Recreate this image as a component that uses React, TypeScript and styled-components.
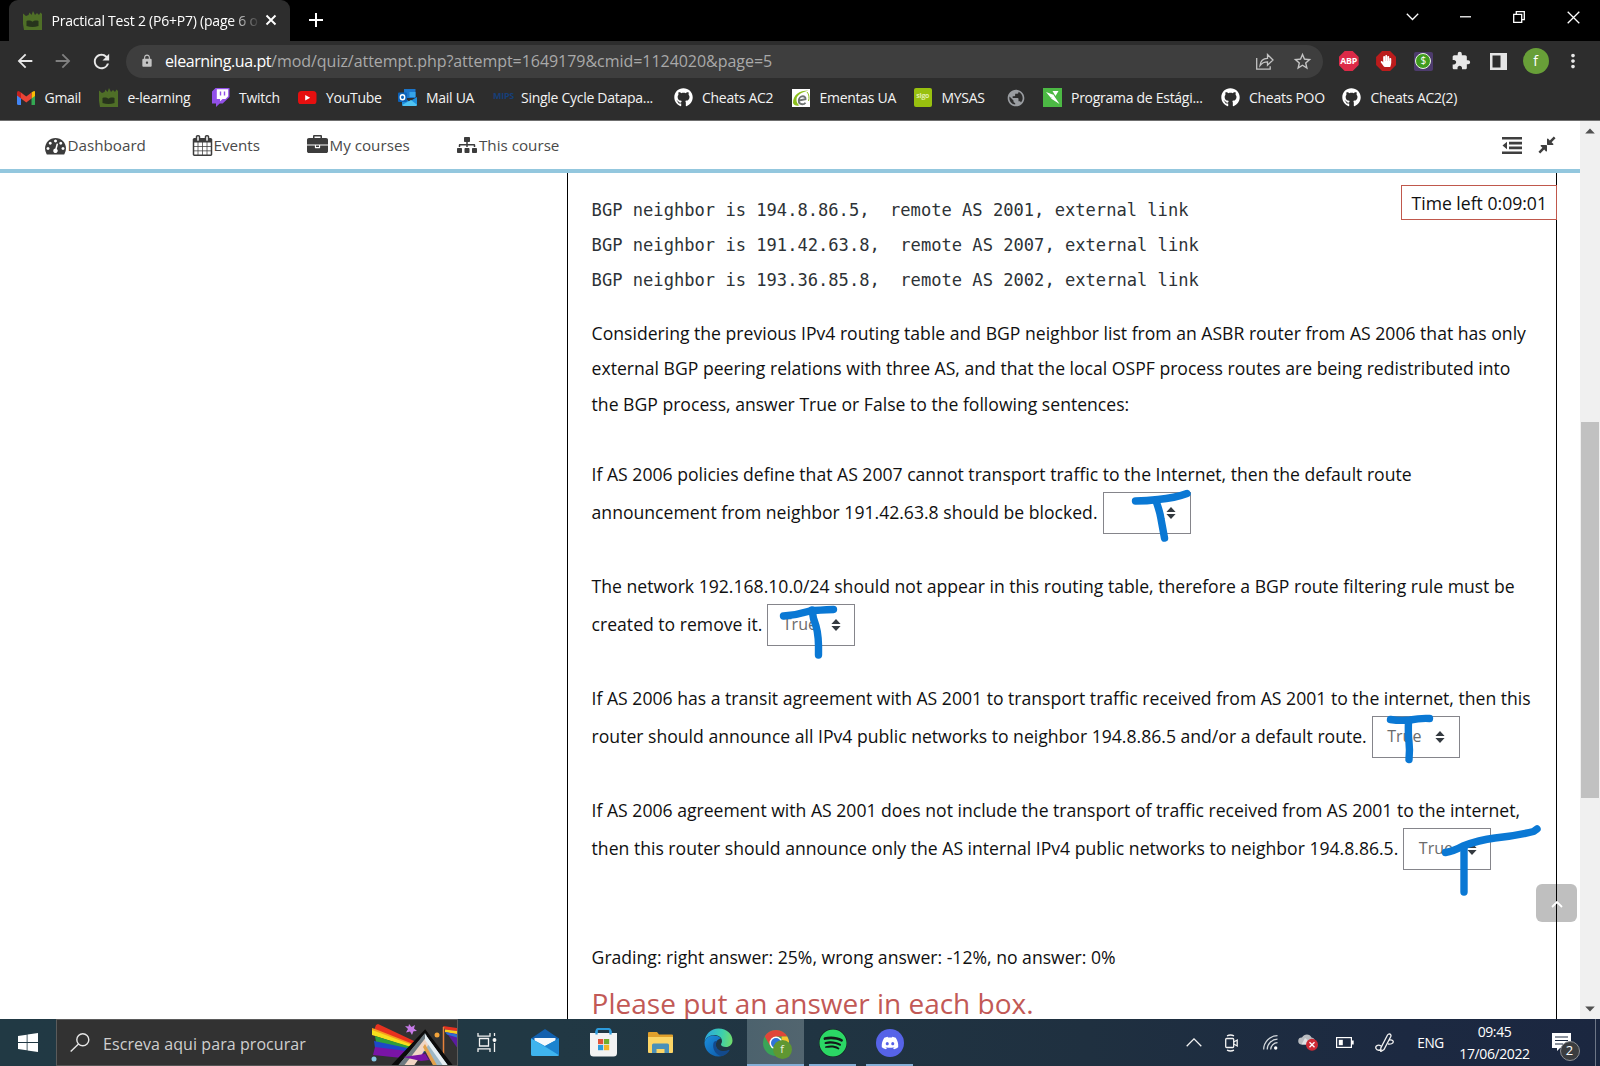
import React from "react";
import styled, { createGlobalStyle, css } from "styled-components";
import { FaGithub, FaSitemap, FaSpotify, FaDiscord, FaHandPaper } from "react-icons/fa";
import { MdExtension, MdLock, MdRefresh, MdArrowBack, MdArrowForward, MdMoreVert, MdStarBorder, MdPublic } from "react-icons/md";

const GlobalStyle = createGlobalStyle`
  * { box-sizing: border-box; }
  body { margin: 0; background: #fff; font-family: "Open Sans", "Noto Sans", sans-serif; overflow: hidden; }
  svg { display: block; flex: none; }
`;

const Screen = styled.div`
  width: 1600px;
  height: 1066px;
  display: flex;
  flex-direction: column;
  overflow: hidden;
`;

/* ---------- browser chrome ---------- */

const TabStrip = styled.div`
  height: 41px;
  flex: none;
  background: #000;
  display: flex;
  padding-left: 9px;
`;

const Tab = styled.div`
  width: 281px;
  height: 41px;
  background: #2d2d2d;
  border-radius: 9px 9px 0 0;
  display: flex;
  align-items: center;
  padding: 0 13px 1px 14px;
  color: #fff;
`;

const TabTitle = styled.div`
  flex: 1;
  margin: 0 0 0 9.5px;
  font-size: 14px;
  letter-spacing: -0.22px;
  white-space: nowrap;
  mask-image: linear-gradient(90deg, #000 84%, transparent 98%);
`;

const NewTab = styled.div`
  width: 52px;
  padding-bottom: 2px;
  display: flex;
  align-items: center;
  justify-content: center;
`;

const WindowButtons = styled.div`
  margin-left: auto;
  display: flex;
  height: 34px;
`;

const WindowButton = styled.div`
  width: 53.7px;
  display: flex;
  align-items: center;
  justify-content: center;
`;

const Toolbar = styled.div`
  height: 40px;
  flex: none;
  background: #2d2d2d;
  display: flex;
  align-items: center;
  color: #e8e8e8;
`;

const ToolButton = styled.div<{ $w: number; $dim?: boolean }>`
  width: ${(p) => p.$w}px;
  flex: none;
  display: flex;
  align-items: center;
  justify-content: center;
  color: ${(p) => (p.$dim ? "#808080" : "#e8e8e8")};
`;

const Omnibox = styled.div`
  width: 1197px;
  flex: none;
  height: 33px;
  margin-right: 7px;
  border-radius: 17px;
  background: #3e3e3e;
  display: flex;
  align-items: center;
  padding: 0 2px 0 14px;
  color: #c4c4c4;
`;

const Url = styled.div`
  flex: 1;
  margin-left: 11px;
  font-size: 16px;
  letter-spacing: -0.04px;
  color: #a9a9a9;
  white-space: nowrap;
`;

const Domain = styled.span`
  color: #fff;
  letter-spacing: -0.42px;
`;

const OmniAction = styled.div`
  width: 37.5px;
  display: flex;
  justify-content: center;
`;

const Avatar = styled.div`
  width: 26px;
  height: 26px;
  border-radius: 50%;
  background: #689f38;
  color: #fff;
  font-size: 14px;
  line-height: 25px;
  text-align: center;
`;

const AbpBadge = styled.div`
  width: 20px;
  height: 20px;
  background: #dc2a48;
  clip-path: polygon(30% 0, 70% 0, 100% 30%, 100% 70%, 70% 100%, 30% 100%, 0 70%, 0 30%);
  color: #fff;
  font-size: 8.8px;
  font-weight: 700;
  letter-spacing: -0.2px;
  line-height: 20px;
  text-align: center;
`;

const HandBadge = styled.div`
  width: 20px;
  height: 20px;
  background: #bb1c1c;
  clip-path: polygon(30% 0, 70% 0, 100% 30%, 100% 70%, 70% 100%, 30% 100%, 0 70%, 0 30%);
  display: flex;
  align-items: center;
  justify-content: center;
  color: #fff;
`;

const CoinBadge = styled.div`
  width: 19px;
  height: 19px;
  background: #4d3b6d;
  border-radius: 2px;
  display: flex;
  align-items: center;
  justify-content: center;
`;

const Coin = styled.div`
  width: 16px;
  height: 16px;
  border-radius: 50%;
  border: 1.5px solid #e9f3e4;
  background: #3f9b1d;
  color: #fff;
  font-size: 10px;
  line-height: 13px;
  text-align: center;
`;

const Bookmarks = styled.div`
  height: 40px;
  flex: none;
  background: #2d2d2d;
  border-bottom: 1px solid #6f6f6f;
  display: flex;
  align-items: center;
  padding: 0 0 6px 16.5px;
`;

const Bookmark = styled.div<{ $w: number }>`
  width: ${(p) => p.$w}px;
  flex: none;
  display: flex;
  align-items: center;
  gap: 9.5px;
  color: #f3f3f3;
  font-size: 14px;
  letter-spacing: -0.28px;
  white-space: nowrap;
`;

const SiteTile = styled.div<{ $bg: string; $fg: string; $size: number }>`
  width: 18.5px;
  height: 18.5px;
  border-radius: 2px;
  background: ${(p) => p.$bg};
  color: ${(p) => p.$fg};
  font-size: ${(p) => p.$size}px;
  line-height: 16.5px;
  text-align: center;
  font-weight: 700;
`;

/* ---------- page ---------- */

const Viewport = styled.div`
  flex: 1;
  min-height: 0;
  display: flex;
  background: #fff;
`;

const Page = styled.div`
  width: 1580px;
  display: flex;
  flex-direction: column;
  position: relative;
  overflow: hidden;
`;

const SiteNav = styled.div`
  height: 52px;
  flex: none;
  border-bottom: 4px solid #93c7de;
  display: flex;
  align-items: center;
  padding: 0 23px 0 45px;
  color: #3f3f3f;
`;

const NavItem = styled.div<{ $w: number; $gap: number }>`
  width: ${(p) => p.$w}px;
  display: flex;
  align-items: center;
  gap: ${(p) => p.$gap}px;
  font-size: 15.2px;
  line-height: 22px;
  padding-bottom: 1px;
  color: #4a4a4a;
  svg { color: #3c3c3c; margin-top: 1px; }
`;

const NavTools = styled.div`
  margin-left: auto;
  display: flex;
  align-items: center;
  gap: 15px;
`;

const Question = styled.div`
  flex: 1;
  width: 990px;
  margin-left: 567px;
  border-left: 1.5px solid #000;
  border-right: 1.5px solid #000;
  padding: 19.6px 0 0 23.6px;
  font-size: 17.6px;
  line-height: 35.2px;
  color: #101010;
  white-space: nowrap;
`;

const NeighborList = styled.pre`
  margin: 0 0 18px;
  font-family: "DejaVu Sans Mono", "Liberation Mono", monospace;
  font-size: 17.1px;
  line-height: 35.2px;
  color: #2d3236;
`;

const Line = styled.div`
  height: 35.2px;
`;

const Statement = styled.div`
  margin-top: 35.2px;
`;

const AnswerLine = styled.div`
  height: 41.6px;
  display: flex;
  align-items: center;
`;

const Select = styled.div`
  position: relative;
  width: 88px;
  height: 42px;
  flex: none;
  margin-left: 5px;
  border: 1px solid #85858b;
  padding: 0 13.5px 0 14.5px;
  display: flex;
  align-items: center;
  justify-content: space-between;
  font-size: 16px;
  color: #6b6b6b;
  background: #fff;
`;

const Ink = styled.svg`
  position: absolute;
  left: -1px;
  top: -1px;
  overflow: visible;
  fill: none;
  stroke: #0a78d4;
  stroke-width: 7.4;
  stroke-linecap: round;
  stroke-linejoin: round;
  z-index: 1;
`;

const Grading = styled.div`
  margin-top: 70.4px;
`;

const Warning = styled.div`
  margin-top: 11px;
  font-size: 28px;
  line-height: 34px;
  color: #c25956;
`;

const Timer = styled.div`
  position: absolute;
  left: 1401px;
  top: 64px;
  width: 156px;
  height: 35px;
  border: 1px solid #c0584c;
  background: #fff;
  font-size: 17.6px;
  line-height: 34px;
  padding-left: 9.5px;
  color: #101010;
`;

const BackToTop = styled.div`
  position: absolute;
  left: 1536px;
  top: 763px;
  width: 41px;
  height: 38px;
  border-radius: 6px;
  background: rgba(0, 0, 0, 0.25);
  display: flex;
  align-items: center;
  justify-content: center;
  padding-top: 3px;
`;

const ScrollTrack = styled.div`
  width: 20px;
  background: #f0f0f0;
  display: flex;
  flex-direction: column;
  align-items: center;
  padding: 7px 0 7px;
`;

const ScrollThumb = styled.div`
  width: 18px;
  height: 376px;
  margin: 288px 0 auto;
  background: #c1c1c1;
`;

/* ---------- taskbar ---------- */

const Taskbar = styled.div`
  height: 47px;
  flex: none;
  background: linear-gradient(90deg, #213944 0%, #213844 35%, #1f3040 68%, #1c2941 88%, #1b2740 100%);
  display: flex;
  color: #fff;
`;

const TaskCell = styled.div<{ $w: number; $active?: boolean; $open?: boolean }>`
  width: ${(p) => p.$w}px;
  height: 47px;
  flex: none;
  display: flex;
  align-items: center;
  justify-content: center;
  ${(p) => p.$active && css`background: linear-gradient(90deg, #4c626d, #52656f);`}
  ${(p) => p.$open && css`box-shadow: inset 0 -2px 0 #84aed6;`}
`;

const OpenApp = styled(TaskCell)`
  margin: 0 5px;
`;

const SearchBox = styled.div`
  width: 402px;
  height: 47px;
  flex: none;
  background: #323232;
  border: 1px solid #5b5b5b;
  border-bottom-color: #555;
  display: flex;
  align-items: center;
  padding-left: 13px;
  font-size: 16px;
  letter-spacing: 0.07px;
  color: #cfcfcf;
  overflow: hidden;
  svg:last-child { margin-left: auto; }
  span { margin: 2px 0 0 13px; }
`;

const Tray = styled.div`
  margin-left: auto;
  display: flex;
`;

const Language = styled.div`
  width: 49px;
  line-height: 48px;
  text-align: center;
  font-size: 13.6px;
  letter-spacing: -0.4px;
`;

const Clock = styled.div`
  width: 79px;
  margin-right: 1px;
  text-align: center;
  font-size: 14px;
  letter-spacing: -0.4px;
  line-height: 22px;
  padding-top: 2px;
`;

const Notices = styled.div`
  position: relative;
  width: 60px;
  padding: 14px 0 0 17px;
`;

const NoticeCount = styled.div`
  position: absolute;
  left: 24.5px;
  top: 22px;
  width: 20px;
  height: 20px;
  border-radius: 50%;
  border: 1.5px solid #8d8f93;
  background: #3b3d40;
  font-size: 13px;
  line-height: 17px;
  text-align: center;
`;

const DesktopEdge = styled.div`
  width: 5px;
  border-left: 1px solid #6d7686;
`;

/* ---------- drawings ---------- */

const Crest = () => (
  <svg width="19" height="19" viewBox="0 0 19 19">
    <path d="M0 2.500l3 2.500 2.500-1 1-2.500L8.500 4 10 0l2 4 2-2 2 2 1.500-2.500L19 3v16H1L0 13z" fill="#4f6f27" />
    <path d="M3.500 10c2-.8 4.500-.6 6 .8 1.500-1.400 4-1.600 6-.8v5c-4 1.200-8 1.200-12 0z" fill="#27331c" />
  </svg>
);

const GmailIcon = () => (
  <svg width="18.500" height="14" viewBox="0 0 18.5 14">
    <path d="M0 2v10.500Q0 14 1.500 14H4V4z" fill="#4285f4" />
    <path d="M18.500 2v10.500q0 1.500-1.500 1.500h-2.500V4z" fill="#34a853" />
    <path d="M14.500 1.500L16 .4Q18.500-.6 18.500 2v2.500l-4 3z" fill="#fbbc04" />
    <path d="M4 7.500V1.500L9.250 5.600 14.500 1.500v6L9.250 11.500z" fill="#ea4335" />
    <path d="M0 2Q0-.6 2.500.4L4 1.500v6l-4-3z" fill="#c5221f" />
  </svg>
);

const TwitchIcon = () => (
  <svg width="17.500" height="19" viewBox="0 0 17.5 19">
    <path d="M3.500 0L0 3.500v12h4V19l3.700-3.500h3L17.500 9V0z" fill="#9250e8" />
    <path d="M4.800 1.300h11.400v7l-2.700 2.700h-3l-2.400 2.300V11H4.800z" fill="#fff" />
    <path d="M8.500 3.500v4M12.500 3.500v4" stroke="#9250e8" strokeWidth="1.400" />
  </svg>
);

const YouTubeIcon = () => (
  <svg width="18.500" height="13.500" viewBox="0 0 18.5 13.5">
    <rect width="18.500" height="13.500" rx="3.500" fill="#e60f0f" />
    <path d="M7.200 3.900v5.700l5-2.850z" fill="#fff" />
  </svg>
);

const OutlookIcon = () => (
  <svg width="19" height="17" viewBox="0 0 19 17">
    <path d="M6 0h11.500v9H6z" fill="#1b75c9" />
    <path d="M11.500 3h6v5h-6z" fill="#35a4e8" />
    <path d="M4 8l7.500 4.500L19 8v7.500q0 1.500-1.500 1.500h-12Q4 17 4 15.500z" fill="#1e8fdc" />
    <path d="M4 16l9-5 6 4.800q-.4 1.200-1.500 1.200h-12z" fill="#4fc3f2" />
    <rect y="3.500" width="9" height="9.500" rx="1" fill="#0c62b8" />
    <ellipse cx="4.500" cy="8.250" rx="2.200" ry="2.500" fill="none" stroke="#fff" strokeWidth="1.400" />
  </svg>
);

const EmentasIcon = () => (
  <svg width="18" height="18" viewBox="0 0 18 18">
    <rect width="18" height="18" fill="#fff" />
    <path d="M1 14C1 6 7 1.500 16.500 1.500 10 3 5 6 4.500 10c-.3 3 1 5 3 6.500C4 17 1.500 16 1 14z" fill="#8dbf1e" />
    <path d="M7 11.500l6.500-1.200c.3-2-1-3-2.700-3-2.300 0-4 2-4 4.300s1.500 3.700 3.400 3.700c1.500 0 2.600-.6 3.300-1.600" fill="none" stroke="#6f7472" strokeWidth="1.900" />
    <path d="M15 3c2 2 2.500 6 1.500 9" fill="none" stroke="#8dbf1e" strokeWidth="1" />
  </svg>
);

const ProgramIcon = () => (
  <svg width="19" height="19" viewBox="0 0 19 19">
    <rect width="19" height="19" fill="#4cb944" />
    <path d="M3 4l8 3-3 3zM9.500 3h6L12.500 8zM10.500 7l6 9-8.500-5.500z" fill="#fff" />
  </svg>
);

const GaugeIcon = () => (
  <svg width="21" height="21" viewBox="0 0 1792 1792" fill="currentColor">
    <path d="M384 1152q0-53-37.500-90.500t-90.500-37.500-90.500 37.500-37.500 90.500 37.500 90.500 90.500 37.500 90.500-37.500 37.500-90.500zm192-448q0-53-37.500-90.500t-90.500-37.500-90.500 37.500-37.500 90.500 37.500 90.500 90.500 37.500 90.500-37.500 37.500-90.500zm428 481l101-382q6-26-7.500-48.500t-38.500-29.500-48 6.500-30 39.500l-101 382q-60 5-107 43.500t-63 98.500q-20 77 20 146t117 89 146-20 89-117q16-60-6-117t-72-91zm660-33q0-53-37.500-90.500t-90.500-37.500-90.500 37.500-37.500 90.500 37.500 90.500 90.500 37.500 90.500-37.500 37.500-90.500zm-640-640q0-53-37.500-90.500t-90.500-37.500-90.500 37.500-37.500 90.500 37.500 90.500 90.500 37.500 90.500-37.500 37.500-90.500zm448 192q0-53-37.500-90.500t-90.500-37.500-90.500 37.500-37.500 90.500 37.500 90.500 90.500 37.500 90.500-37.500 37.500-90.500zm320 448q0 261-141 483-19 29-54 29h-1402q-35 0-54-29-141-221-141-483 0-182 71-348t191-286 286-191 348-71 348 71 286 191 191 286 71 348z" />
  </svg>
);

const CalendarIcon = () => (
  <svg width="21" height="21" viewBox="0 0 1792 1792" fill="currentColor">
    <path d="M192 1664h288v-288h-288v288zm352 0h320v-288h-320v288zm-352-352h288v-320h-288v320zm352 0h320v-320h-320v320zm-352-384h288v-288h-288v288zm736 736h320v-288h-320v288zm-384-736h320v-288h-320v288zm768 736h288v-288h-288v288zm-384-352h320v-320h-320v320zm-352-864v-288q0-13-9.500-22.500t-22.500-9.500h-64q-13 0-22.500 9.500t-9.500 22.500v288q0 13 9.500 22.500t22.500 9.500h64q13 0 22.500-9.500t9.500-22.500zm736 864h288v-320h-288v320zm-384-384h320v-288h-320v288zm384 0h288v-288h-288v288zm32-480v-288q0-13-9.500-22.500t-22.500-9.500h-64q-13 0-22.500 9.500t-9.500 22.500v288q0 13 9.500 22.500t22.500 9.500h64q13 0 22.500-9.500t9.500-22.500zm384-64v1280q0 52-38 90t-90 38h-1408q-52 0-90-38t-38-90v-1280q0-52 38-90t90-38h128v-96q0-66 47-113t113-47h64q66 0 113 47t47 113v96h384v-96q0-66 47-113t113-47h64q66 0 113 47t47 113v96h128q52 0 90 38t38 90z" />
  </svg>
);

const BriefcaseIcon = () => (
  <svg width="21" height="21" viewBox="0 0 1792 1792" fill="currentColor">
    <path d="M640 256h512v-128h-512v128zm1152 640v480q0 66-47 113t-113 47h-1472q-66 0-113-47t-47-113v-480h672v160q0 26 19 45t45 19h320q26 0 45-19t19-45v-160h672zm-768 0v128h-256v-128h256zm768-480v384h-1792v-384q0-66 47-113t113-47h352v-160q0-40 28-68t68-28h576q40 0 68 28t28 68v160h352q66 0 113 47t47 113z" />
  </svg>
);

const OutdentIcon = () => (
  <svg width="20" height="17" viewBox="0 0 20 17" fill="currentColor">
    <path d="M0 0h20v2.600H0zM7 4.800h13v2.600H7zM7 9.600h13v2.600H7zM0 14.400h20V17H0zM5 4.800v7.400L.5 8.500z" />
  </svg>
);

const CompressIcon = () => (
  <svg width="20" height="20" viewBox="0 0 1792 1792" fill="currentColor">
    <path d="M896 960v448q0 26-19 45t-45 19-45-19l-144-144-332 332q-10 10-23 10t-23-10l-114-114q-10-10-10-23t10-23l332-332-144-144q-19-19-19-45t19-45 45-19h448q26 0 45 19t19 45zm755-672q0 13-10 23l-332 332 144 144q19 19 19 45t-19 45-45 19h-448q-26 0-45-19t-19-45v-448q0-26 19-45t45-19 45 19l144 144 332-332q10-10 23-10t23 10l114 114q10 10 10 23z" />
  </svg>
);

const SortArrows = () => (
  <svg width="10" height="12" viewBox="0 0 10 12" fill="#343a40">
    <path d="M5 0l4.600 5H.4zM5 12L.4 7h9.200z" />
  </svg>
);

const ShareIcon = () => (
  <svg width="18" height="17" viewBox="0 0 18 17" fill="none" stroke="#c4c4c4" strokeWidth="1.300">
    <path d="M.7 5v11.200h13.500v-3M4 12.500c.5-5 3-7 7.500-7.200V1.500L17 7l-5.500 5.300V8.800C8 8.800 6 9.800 4 12.500z" />
  </svg>
);

const WindowsLogo = () => (
  <svg width="20" height="19" viewBox="0 0 20 19" fill="#fff">
    <path d="M0 2.900l8.700-1.200V9H0zM9.500 1.600L20 0v9H9.500zM0 9.900h8.700v7.400L0 16.100zM9.500 9.900H20V19L9.500 17.400z" />
  </svg>
);

const SearchArt = () => (
  <svg width="86" height="45" viewBox="0 0 86 45">
    <path d="M5 5L7 4 60 29v5L2 13z" fill="#e8321f" />
    <path d="M1 8l3 1 56 22v2L1 14z" fill="#f6a01e" />
    <path d="M1 10l59 22v2L1 15z" fill="#f6e01e" />
    <path d="M4 16l56 17v3L5 22z" fill="#2e9e3c" />
    <path d="M3 21l57 12v4L4 28z" fill="#1d49c9" />
    <path d="M4 27l56 7v7L2 35z" fill="#7a14a6" />
    <path d="M74 7l12 1.500v19L75 12z" fill="#5a1ca0" />
    <path d="M72 6l14 2v3l-12-1.500z" fill="#e8321f" />
    <path d="M74 9.500l12 1.500v3l-12-2z" fill="#f6d01e" />
    <path d="M74 12l12 2.500v3l-10-3z" fill="#2c6fd0" />
    <path d="M72.500 41V7" stroke="#e8823a" strokeWidth="1.500" />
    <path d="M22 47L54 13l26 34" fill="none" stroke="#0b0b0b" strokeWidth="5" />
    <path d="M26 47L54 14l24 33H66L54 27 40 47z" fill="#9db8c6" />
    <path d="M30 47L54 18l4 6-16 23z" fill="#f1d6c4" />
    <path d="M26 47L54 13l2 3-24 31z" fill="#6d7a80" />
    <path d="M54 14l24 33h-5L54 20z" fill="#e6eef2" />
    <path d="M54 24l13 23h-4L52 27z" fill="#e2a14c" />
    <path d="M54 31l8 16H44z" fill="#323232" />
    <path d="M52 30l6 10-8 1-18-4 22-3z" fill="#7a14a6" />
    <path d="M38 4l2.500 3L44 5l-1 3.500 3 2.500-3.500.3L41 15l-2-3.500-4 1L37 9l-3-3 3.500.5z" fill="#c77be8" />
    <circle cx="66" cy="15" r="2.500" fill="#f2a33a" />
    <circle cx="3" cy="39" r="2.500" fill="#86c5e2" />
  </svg>
);

const TaskViewIcon = () => (
  <svg width="20" height="19" viewBox="0 0 20 19" fill="none" stroke="#f2f2f2" strokeWidth="1.300">
    <path d="M1 0v3.200h12V0M1 19v-3.200h12V19M2.500 5.500h9v7.500h-9zM17.500 0v3M17.500 10v9" />
    <circle cx="17.500" cy="7" r="1.300" fill="#fff" />
  </svg>
);

const MailIcon = () => (
  <svg width="28" height="27" viewBox="0 0 28 27">
    <path d="M0 9.500L14 0l14 9.500v6H0z" fill="#1260ae" />
    <path d="M3.500 9h21v8h-21z" fill="#f5f9fc" />
    <path d="M0 9.500L14 17l14-7.500V25q0 2-2 2H2q-2 0-2-2z" fill="#2094dc" />
    <path d="M0 9.500L28 26q-.5 1-2 1H2q-2 0-2-2z" fill="#3fb4ee" />
    <path d="M28 9.500V25q0 .6-.3 1L14 17z" fill="#1c83cf" />
  </svg>
);

const StoreIcon = () => (
  <svg width="27" height="29" viewBox="0 0 27 29">
    <path d="M6.500 6V3.500Q6.500 1 9 1h9q2.500 0 2.500 2.500V6" fill="none" stroke="#2c9bdc" strokeWidth="2.200" />
    <path d="M0 5h27v20q0 3.500-3.500 3.500h-20Q0 28.500 0 25z" fill="#f3f3f3" />
    <path d="M6.500 3v3.500M20.500 3v3.500" stroke="#2c9bdc" strokeWidth="2.200" />
    <path d="M8 11h5.200v5.200H8z" fill="#e0543a" />
    <path d="M14 11h5.200v5.200H14z" fill="#6fae2d" />
    <path d="M8 17h5.200v5.200H8z" fill="#2b9bdb" />
    <path d="M14 17h5.200v5.200H14z" fill="#f2b628" />
  </svg>
);

const ExplorerIcon = () => (
  <svg width="25" height="21" viewBox="0 0 25 21">
    <path d="M0 1q0-1 1-1h8l2 2.500h13q1 0 1 1V20H0z" fill="#e0a02c" />
    <path d="M0 5h25v15q0 1-1 1H1q-1 0-1-1z" fill="#fbd566" />
    <path d="M4 21v-8q0-1.500 1.500-1.500h14Q21 11.500 21 13v8h-4.500v-4h-8v4z" fill="#4a90b8" />
  </svg>
);

const EdgeIcon = () => (
  <svg width="29" height="29" viewBox="0 0 29 29">
    <defs>
      <linearGradient id="edgeTop" x1="0" y1=".4" x2="1" y2=".5">
        <stop offset="0" stopColor="#2aa5e0" />
        <stop offset=".6" stopColor="#3ccfae" />
        <stop offset="1" stopColor="#6fdc6c" />
      </linearGradient>
      <linearGradient id="edgeBody" x1="0" y1="0" x2="1" y2="1">
        <stop offset="0" stopColor="#1b8fdc" />
        <stop offset="1" stopColor="#0c54a4" />
      </linearGradient>
    </defs>
    <path d="M.5 14C1 6 7 .5 14.500.5 23 .5 28.500 6.500 28.500 12.500c0 4-3 6.500-6.500 6.500-3 0-5-1-5-2.500 0-1 1-1.500 1-3.500C18 9.500 14.500 7 10.500 7 5.500 7 1.500 10 .5 14z" fill="url(#edgeTop)" />
    <path d="M.5 14.500C1.500 10 5.500 7.500 10 7.500c3 0 5.500 1 7 3-4 .5-6 4-5 8 1 4.500 6 7 12 4.500C21.500 26.800 18 28.500 14.500 28.500 6.500 28.500.3 22 .5 14.500z" fill="url(#edgeBody)" />
    <path d="M9.500 15c-1.500 5.500 2 12 8 13.100 3-.6 6.500-3 8-5.700.3-.6-.3-.9-.8-.6-5.500 2.700-12 .7-12.700-4.300-.2-1.500.2-3.200 1.500-4.700-2 0-3.500.8-4 2.200z" fill="#134a8c" />
  </svg>
);

const ProfileBubble = styled.div`
  position: absolute;
  right: -3px;
  bottom: -3px;
  width: 19px;
  height: 19px;
  border-radius: 50%;
  background: #5f9732;
  color: #e8f0df;
  font-size: 11px;
  line-height: 17px;
  text-align: center;
`;

const ChromeWrap = styled.div`
  position: relative;
`;

const ChromeIcon = () => (
  <ChromeWrap>
    <svg width="26" height="26" viewBox="0 0 26 26">
      <circle cx="13" cy="13" r="13" fill="#3aa457" />
      <path d="M1.740 6.500A13 13 0 0 1 24.260 6.500H13L7.400 16.200z" fill="#e0453a" />
      <path d="M24.260 6.500A13 13 0 0 1 13 26l5.600-9.800V6.500z" fill="#f7c52e" />
      <circle cx="13" cy="13" r="6.500" fill="#fff" />
      <circle cx="13" cy="13" r="5" fill="#2f73d8" />
    </svg>
    <ProfileBubble>f</ProfileBubble>
  </ChromeWrap>
);

const SpotifyWrap = styled.div`
  width: 28px;
  height: 28px;
  border-radius: 50%;
  background: #14181a;
  color: #2bd765;
`;

const DiscordWrap = styled.div`
  width: 28px;
  height: 28px;
  border-radius: 50%;
  background: #5663e8;
  display: flex;
  align-items: center;
  justify-content: center;
  color: #fff;
`;

const MeetIcon = () => (
  <svg width="14" height="18" viewBox="0 0 14 18" fill="none" stroke="#f2f2f2" strokeWidth="1.300">
    <rect x=".7" y="4.500" width="8" height="9" rx="1" />
    <path d="M8.700 8l3.500-2v6l-3.500-2M2 1.800Q5.500.2 9 1.800M2 16.200q3.500 1.600 7 0" />
  </svg>
);

const WifiIcon = () => (
  <svg width="15" height="15" viewBox="0 0 15 15" fill="none" stroke="#d5dade" strokeWidth="1.200">
    <path d="M.7 14.500C.7 7 7 .7 14.500.7M4.200 14.500c0-5.600 4.700-10.300 10.300-10.300M7.700 14.500c0-3.700 3.100-6.800 6.800-6.800" />
    <circle cx="12.700" cy="13" r="1.700" fill="#fff" stroke="none" />
  </svg>
);

const CloudIcon = () => (
  <svg width="20" height="17" viewBox="0 0 20 17">
    <path d="M3.500 10.500a3.500 3.500 0 0 1 .5-7C6-.5 12-.5 13.500 3.500c3 .3 4 3 3.500 7z" fill="#b9bcc0" />
    <path d="M7 4l9 6.500H3.500z" fill="#dfe1e3" />
    <circle cx="14" cy="10.800" r="6" fill="#cf2a35" />
    <path d="M11.500 8.300l5 5M16.500 8.300l-5 5" stroke="#fff" strokeWidth="1.300" />
  </svg>
);

const BatteryIcon = () => (
  <svg width="18" height="11" viewBox="0 0 18 11" fill="none" stroke="#fff" strokeWidth="1.200">
    <rect x=".6" y=".6" width="14.800" height="9.800" />
    <path d="M16.800 3.500v4" strokeWidth="1.800" />
    <rect x="2.800" y="2.800" width="4" height="5.400" fill="#fff" stroke="none" />
  </svg>
);

const PenIcon = () => (
  <svg width="19" height="19" viewBox="0 0 19 19" fill="none" stroke="#f2f2f2" strokeWidth="1.300">
    <path d="M14.500.8c1.500.5 1.700 1.500 1.300 2.700L9 16.500l-3.200 2V15L12.500 2q.8-1.300 2-1.200zM6 13c-3-2-6 0-5 2.500s4 2 5.500.5M14 7c2-.5 4.300 0 4.300 1.800S15.500 11.500 13 11" />
  </svg>
);

const bars: { w: number; label: string; icon: React.ReactNode }[] = [
  { w: 82.5, label: "Gmail", icon: <GmailIcon /> },
  { w: 113, label: "e-learning", icon: <Crest /> },
  { w: 86, label: "Twitch", icon: <TwitchIcon /> },
  { w: 99.5, label: "YouTube", icon: <YouTubeIcon /> },
  { w: 95.5, label: "Mail UA", icon: <OutlookIcon /> },
  { w: 180.5, label: "Single Cycle Datapa...", icon: <SiteTile $bg="transparent" $fg="#163f78" $size={9}>MIPS</SiteTile> },
  { w: 118.5, label: "Cheats AC2", icon: <FaGithub size={19} color="#fff" /> },
  { w: 121.5, label: "Ementas UA", icon: <EmentasIcon /> },
  { w: 92, label: "MYSAS", icon: <SiteTile $bg="#98c00f" $fg="#e0efb0" $size={7}>sigo</SiteTile> },
  { w: 37, label: "", icon: <MdPublic size={20} color="#9a9da1" /> },
  { w: 178, label: "Programa de Estági...", icon: <ProgramIcon /> },
  { w: 121.5, label: "Cheats POO", icon: <FaGithub size={19} color="#fff" /> },
  { w: 120, label: "Cheats AC2(2)", icon: <FaGithub size={19} color="#fff" /> },
];

const statements: { first: string; second: string; value: string; strokes: string[] }[] = [
  {
    first: "If AS 2006 policies define that AS 2007 cannot transport traffic to the Internet, then the default route",
    second: "announcement from neighbor 191.42.63.8 should be blocked.",
    value: "",
    strokes: ["M32.500 9Q44 9 55 7.500Q72 6 84 1.500", "M53 9Q57 20 58 27Q60 38 61.500 46"],
  },
  {
    first: "The network 192.168.10.0/24 should not appear in this routing table, therefore a BGP route filtering rule must be",
    second: "created to remove it.",
    value: "True",
    strokes: ["M16.500 12Q30 11 43 7Q52 6 66.500 5.500", "M45 6Q46 15 49 22Q52 32 51.500 51"],
  },
  {
    first: "If AS 2006 has a transit agreement with AS 2001 to transport traffic received from AS 2001 to the internet, then this",
    second: "router should announce all IPv4 public networks to neighbor 194.8.86.5 and/or a default route.",
    value: "True",
    strokes: ["M18.500 3.500Q28 5 38 4Q48 2 57.500 2.500", "M36.500 5Q36 18 37 26Q38 34 37 43.500"],
  },
  {
    first: "If AS 2006 agreement with AS 2001 does not include the transport of traffic received from AS 2001 to the internet,",
    second: "then this router should announce only the AS internal IPv4 public networks to neighbor 194.8.86.5.",
    value: "True",
    strokes: ["M42.500 24.500Q50 23.500 60 18Q76 12 92 10Q112 8 130.500 3.500L134 1", "M61 19V64"],
  },
];

export default function App() {
  return (
    <Screen>
      <GlobalStyle />
      <TabStrip>
        <Tab>
          <Crest />
          <TabTitle>Practical Test 2 (P6+P7) (page 6 o</TabTitle>
          <svg width="12" height="12" viewBox="0 0 12 12" stroke="#fff" strokeWidth="1.900">
            <path d="M1.500 1.500l9 9M10.500 1.500l-9 9" />
          </svg>
        </Tab>
        <NewTab>
          <svg width="14" height="14" viewBox="0 0 14 14" stroke="#fff" strokeWidth="2">
            <path d="M7 0v14M0 7h14" />
          </svg>
        </NewTab>
        <WindowButtons>
          <WindowButton>
            <svg width="13" height="8" viewBox="0 0 13 8" fill="none" stroke="#fff" strokeWidth="1.300"><path d="M.8 .8l5.700 5.700L12.200 .8" /></svg>
          </WindowButton>
          <WindowButton>
            <svg width="11" height="2" viewBox="0 0 11 2"><path d="M0 0h11v1.500H0z" fill="#d8d8d8" /></svg>
          </WindowButton>
          <WindowButton>
            <svg width="12" height="12" viewBox="0 0 12 12" fill="none" stroke="#fff" strokeWidth="1.300"><path d="M.7 3.300h8v8h-8zM3.300 3V.7h8v8H9" /></svg>
          </WindowButton>
          <WindowButton>
            <svg width="13" height="13" viewBox="0 0 13 13" stroke="#fff" strokeWidth="1.300"><path d="M.7 .7l11.600 11.600M12.300 .7L.7 12.300" /></svg>
          </WindowButton>
        </WindowButtons>
      </TabStrip>

      <Toolbar>
        <ToolButton $w={50}><MdArrowBack size={22} /></ToolButton>
        <ToolButton $w={26} $dim><MdArrowForward size={22} /></ToolButton>
        <ToolButton $w={50}><MdRefresh size={23} /></ToolButton>
        <Omnibox>
          <MdLock size={14} />
          <Url><Domain>elearning.ua.pt</Domain>/mod/quiz/attempt.php?attempt=1649179&amp;cmid=1124020&amp;page=5</Url>
          <OmniAction><ShareIcon /></OmniAction>
          <OmniAction><MdStarBorder size={21} /></OmniAction>
        </Omnibox>
        <ToolButton $w={37.4}><AbpBadge>ABP</AbpBadge></ToolButton>
        <ToolButton $w={37.4}><HandBadge><FaHandPaper size={12} /></HandBadge></ToolButton>
        <ToolButton $w={37.4}><CoinBadge><Coin>$</Coin></CoinBadge></ToolButton>
        <ToolButton $w={37.4}><MdExtension size={20} /></ToolButton>
        <ToolButton $w={37.4}>
          <svg width="17" height="17" viewBox="0 0 17 17"><path d="M0 0h17v17H0zM2.500 2.500v12h8v-12z" fill="#e4e4e4" fillRule="evenodd" /></svg>
        </ToolButton>
        <ToolButton $w={37.4}><Avatar>f</Avatar></ToolButton>
        <ToolButton $w={37.4}><MdMoreVert size={22} /></ToolButton>
      </Toolbar>

      <Bookmarks>
        {bars.map((b, i) => (
          <Bookmark key={i} $w={b.w}>
            {b.icon}
            {b.label}
          </Bookmark>
        ))}
      </Bookmarks>

      <Viewport>
        <Page>
          <SiteNav>
            <NavItem $w={147} $gap={1.5}><GaugeIcon />Dashboard</NavItem>
            <NavItem $w={115} $gap={0.5}><CalendarIcon />Events</NavItem>
            <NavItem $w={150} $gap={1.5}><BriefcaseIcon />My courses</NavItem>
            <NavItem $w={140} $gap={2}><FaSitemap size={20} />This course</NavItem>
            <NavTools><OutdentIcon /><CompressIcon /></NavTools>
          </SiteNav>
          <Question>
            <NeighborList>{"BGP neighbor is 194.8.86.5,  remote AS 2001, external link\nBGP neighbor is 191.42.63.8,  remote AS 2007, external link\nBGP neighbor is 193.36.85.8,  remote AS 2002, external link"}</NeighborList>
            <Line>Considering the previous IPv4 routing table and BGP neighbor list from an ASBR router from AS 2006 that has only</Line>
            <Line>external BGP peering relations with three AS, and that the local OSPF process routes are being redistributed into</Line>
            <Line>the BGP process, answer True or False to the following sentences:</Line>
            {statements.map((s, i) => (
              <Statement key={i}>
                <Line>{s.first}</Line>
                <AnswerLine>
                  {s.second}
                  <Select>
                    <span>{s.value}</span>
                    <SortArrows />
                    <Ink width="88" height="42" viewBox="0 0 88 42">
                      {s.strokes.map((d) => <path key={d} d={d} />)}
                    </Ink>
                  </Select>
                </AnswerLine>
              </Statement>
            ))}
            <Grading>Grading: right answer: 25%, wrong answer: -12%, no answer: 0%</Grading>
            <Warning>Please put an answer in each box.</Warning>
          </Question>
          <Timer>Time left 0:09:01</Timer>
          <BackToTop>
            <svg width="12" height="7" viewBox="0 0 12 7" fill="none" stroke="#fff" strokeWidth="1.800"><path d="M1 6l5-5 5 5" /></svg>
          </BackToTop>
        </Page>
        <ScrollTrack>
          <svg width="10" height="6" viewBox="0 0 10 6"><path d="M5 .5L9.800 5.500H.2z" fill="#505050" /></svg>
          <ScrollThumb />
          <svg width="10" height="6" viewBox="0 0 10 6"><path d="M5 5.500L9.800 .5H.2z" fill="#505050" /></svg>
        </ScrollTrack>
      </Viewport>

      <Taskbar>
        <TaskCell $w={56}><WindowsLogo /></TaskCell>
        <SearchBox>
          <svg width="20" height="19" viewBox="0 0 20 19" fill="none" stroke="#e6e6e6" strokeWidth="1.400">
            <circle cx="12.800" cy="6.800" r="6" />
            <path d="M8.500 11L.7 18.500" />
          </svg>
          <span>Escreva aqui para procurar</span>
          <SearchArt />
        </SearchBox>
        <TaskCell $w={57}><TaskViewIcon /></TaskCell>
        <TaskCell $w={60}><MailIcon /></TaskCell>
        <TaskCell $w={57}><StoreIcon /></TaskCell>
        <TaskCell $w={57}><ExplorerIcon /></TaskCell>
        <TaskCell $w={58}><EdgeIcon /></TaskCell>
        <TaskCell $w={57} $active $open><ChromeIcon /></TaskCell>
        <OpenApp $w={47} $open><SpotifyWrap><FaSpotify size={28} /></SpotifyWrap></OpenApp>
        <OpenApp $w={47} $open><DiscordWrap><FaDiscord size={18} /></DiscordWrap></OpenApp>
        <Tray>
          <TaskCell $w={38}>
            <svg width="16" height="9" viewBox="0 0 16 9" fill="none" stroke="#f2f2f2" strokeWidth="1.300"><path d="M.7 8.300L8 .9l7.300 7.400" /></svg>
          </TaskCell>
          <TaskCell $w={38}><MeetIcon /></TaskCell>
          <TaskCell $w={38}><WifiIcon /></TaskCell>
          <TaskCell $w={37}><CloudIcon /></TaskCell>
          <TaskCell $w={37}><BatteryIcon /></TaskCell>
          <TaskCell $w={43}><PenIcon /></TaskCell>
          <Language>ENG</Language>
          <Clock>09:45<br />17/06/2022</Clock>
          <Notices>
            <svg width="19" height="18" viewBox="0 0 19 18">
              <path d="M0 0h19v15H8l-3 3v-3H0z" fill="#fff" />
              <path d="M3 4h13M3 7.500h13M3 11h8" stroke="#1d2a40" strokeWidth="1.200" />
            </svg>
            <NoticeCount>2</NoticeCount>
          </Notices>
          <DesktopEdge />
        </Tray>
      </Taskbar>
    </Screen>
  );
}
